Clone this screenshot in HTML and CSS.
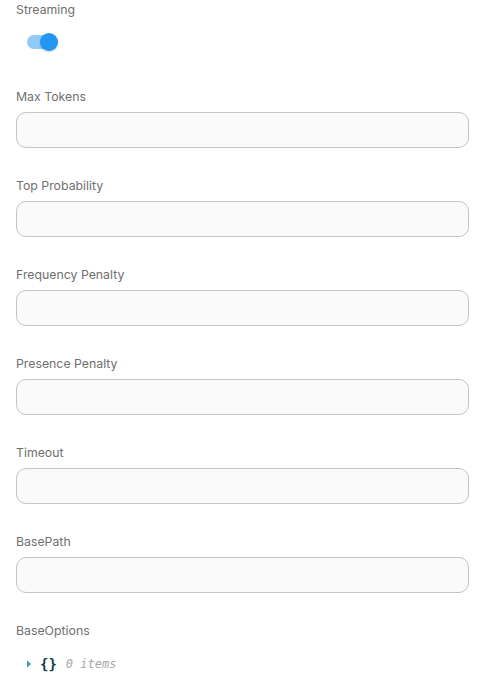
FILE: index.html
```html
<!DOCTYPE html>
<html>
<head>
<meta charset="utf-8">
<link rel="stylesheet" href="styles.css">
</head>
<body>
<div class="form">
  <div class="field">
    <div class="label">Streaming</div>
    <div class="switch">
      <span class="track"></span>
      <span class="thumb"></span>
    </div>
  </div>
  <div class="field">
    <div class="label">Max Tokens</div>
    <input class="input" type="text">
  </div>
  <div class="field">
    <div class="label">Top Probability</div>
    <input class="input" type="text">
  </div>
  <div class="field">
    <div class="label">Frequency Penalty</div>
    <input class="input" type="text">
  </div>
  <div class="field">
    <div class="label">Presence Penalty</div>
    <input class="input" type="text">
  </div>
  <div class="field">
    <div class="label">Timeout</div>
    <input class="input" type="text">
  </div>
  <div class="field">
    <div class="label">BasePath</div>
    <input class="input" type="text">
  </div>
  <div class="field">
    <div class="label">BaseOptions</div>
    <div class="tree">
      <svg class="caret" width="6" height="8" viewBox="0 0 6 8"><path d="M1 0.5 L5 4 L1 7.5 Z" fill="#26a69a"/></svg>
      <span class="braces">{}</span>
      <span class="count">0 items</span>
    </div>
  </div>
</div>
</body>
</html>
```
FILE: styles.css
```css
html, body {
  margin: 0;
  padding: 0;
  background: #ffffff;
}
body {
  font-family: Inter, "Noto Sans", sans-serif;
  font-size: 12.3px;
  color: #707070;
}
.form {
  display: flex;
  flex-direction: column;
  gap: 28px;
  padding: 0 12px 0 16px;
}
.field {
  display: flex;
  flex-direction: column;
}
.label {
  line-height: 20px;
  height: 20px;
  color: #707070;
}
.input {
  box-sizing: border-box;
  margin: 5px 0 0 0;
  height: 36px;
  width: 100%;
  border: 1px solid #c4c4c4;
  border-radius: 10px;
  background: #fafafa;
  outline: none;
  padding: 0 12px;
  font: inherit;
}
.switch {
  position: relative;
  width: 36px;
  height: 20px;
  margin: 12px 0 7px 11px;
}
.track {
  position: absolute;
  left: 0;
  top: 3px;
  width: 28px;
  height: 14px;
  border-radius: 7px;
  background: #90caf9;
}
.thumb {
  position: absolute;
  left: 13px;
  top: 1px;
  width: 18px;
  height: 18px;
  border-radius: 50%;
  background: #2196f3;
  box-shadow: 0 1px 2px rgba(0,0,0,0.2);
}
.tree {
  display: flex;
  align-items: center;
  height: 20px;
  margin: 13px 0 0 10px;
  font-family: "DejaVu Sans Mono", monospace;
}
.caret {
  margin-right: 8px;
}
.braces {
  color: #123f4d;
  font-weight: bold;
  font-size: 14px;
  margin-right: 9px;
}
.count {
  color: #a8a8a8;
  font-style: italic;
  font-size: 12px;
}
```
